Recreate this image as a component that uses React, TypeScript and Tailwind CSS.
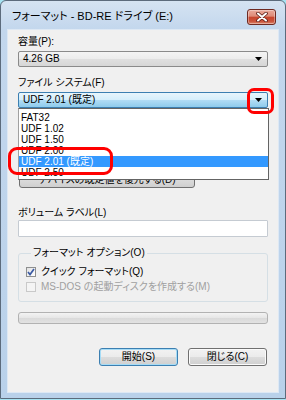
import React from "react";

const F = "font-['Liberation_Sans','Noto_Sans_CJK_JP',sans-serif] [font-feature-settings:'palt']";

function Arrow() {
  return (
    <svg width="7" height="4" viewBox="0 0 7 4">
      <path d="M0 0 H7 L3.5 4 Z" fill="#000" />
    </svg>
  );
}

const items = ["FAT32", "UDF 1.02", "UDF 1.50", "UDF 2.00", "UDF 2.01 (既定)", "UDF 2.50"];

export default function App() {
  return (
    <div className={`w-[286px] h-[400px] bg-[#a6e3f2] text-black ${F}`}>
      <div className="relative w-[286px] h-[399px] border border-[#5c6b7c] rounded-t-[6px] bg-[linear-gradient(to_bottom,#d5e3f2_0px,#c3d7ed_28px,#b9d1ea_100%)] flex flex-col">
        {/* title bar */}
        <div className="h-[28px] flex items-start justify-between pl-[11px] pr-[9px]">
          <div className="mt-[8px] text-[11px] leading-[14px] whitespace-nowrap">フォーマット - BD-RE ドライブ (E:)</div>
          <div className="mt-[8px] w-[29px] h-[16px] rounded-[3px] border border-[#6e2a22] bg-[linear-gradient(to_bottom,#eaaa9c_0%,#de8a77_45%,#c8452d_50%,#c9523a_80%,#dc866c_100%)] flex items-center justify-center shadow-[inset_0_0_0_1px_rgba(255,255,255,0.35)]">
            <svg width="12" height="10" viewBox="0 0 12 10">
              <path d="M2 1.5 L10 8.5 M10 1.5 L2 8.5" stroke="#5a1d16" strokeWidth="3.6" strokeLinecap="round" />
              <path d="M2 1.5 L10 8.5 M10 1.5 L2 8.5" stroke="#ffffff" strokeWidth="2" strokeLinecap="round" />
            </svg>
          </div>
        </div>

        {/* client area */}
        <div className="mx-[6px] h-[364px] bg-[#f0f0f0] border border-[#dde8f4] flex flex-col px-[10px] pt-[6px] text-[10px]">
          <div className="h-[12px] leading-[12px]">容量(P):</div>
          <div className="mt-[3px] h-[16px] rounded-[2px] border border-[#8a8a8a] bg-[linear-gradient(to_bottom,#f4f4f4_0%,#ececec_50%,#e0e0e0_50%,#d6d6d6_100%)] flex items-center justify-between pl-[4px] pr-[5px]">
            <span className="leading-[12px]">4.26 GB</span>
            <Arrow />
          </div>

          <div className="mt-[10px] h-[12px] leading-[12px]">ファイル システム(F)</div>
          <div className="relative mt-[3px] z-10">
            <div className="h-[16px] rounded-[2px] border border-[#3c7fb1] bg-[linear-gradient(to_bottom,#e8f5fc_0%,#d4eefb_50%,#b1dcf5_52%,#8ecbec_100%)] flex items-center justify-between pl-[4px] pr-[5px]">
              <span className="leading-[12px]">UDF 2.01 (既定)</span>
              <Arrow />
            </div>
            <div className="absolute left-0 top-[16px] w-[251px] h-[72px] bg-white border border-[#646464] border-l-[#a0a0a0] pt-[3px] overflow-hidden">
              {items.map((t, i) => (
                <div
                  key={t}
                  className={
                    i === 4
                      ? "h-[11px] leading-[11px] pl-[2px] bg-[#3399ff] text-white"
                      : "h-[11px] leading-[11px] pl-[2px]"
                  }
                >
                  {t}
                </div>
              ))}
            </div>
          </div>

          <div className="mt-[61px] w-[176px] h-[19px] ml-[1px] rounded-[3px] border border-[#707070] bg-[linear-gradient(to_bottom,#f2f2f2_0%,#ebebeb_50%,#dddddd_50%,#cfcfcf_100%)] flex items-center justify-center">
            <span className="leading-[12px] mt-[2px]">デバイスの既定値を復元する(D)</span>
          </div>

          <div className="mt-[19px] h-[12px] leading-[12px]">ボリューム ラベル(L)</div>
          <div className="mt-[1px] h-[17px] bg-white border border-[#c5cbd2] rounded-[1px]" />

          <fieldset className="mt-[10px] border border-[#d5dfe5] rounded-[3px] pl-[7px] pb-[8px]">
            <legend className="ml-[5px] px-[2px] h-[12px] leading-[12px]">フォーマット オプション(O)</legend>
            <div className="mt-[7px] h-[12px] flex items-center">
              <div className="w-[10px] h-[10px] border border-[#8e8f8f] bg-[linear-gradient(to_bottom_right,#e2e2e2,#ffffff)] flex items-center justify-center">
                <svg width="8" height="8" viewBox="0 0 8 8">
                  <path d="M1 4 L3 6.5 L7 1" stroke="#3b5aa3" strokeWidth="1.7" fill="none" />
                </svg>
              </div>
              <span className="ml-[5px] leading-[12px]">クイック フォーマット(Q)</span>
            </div>
            <div className="mt-[3px] h-[12px] flex items-center text-[#a0a0a0]">
              <div className="w-[10px] h-[10px] border border-[#c9c9c9] bg-[#f4f4f4]" />
              <span className="ml-[5px] leading-[12px]">MS-DOS の起動ディスクを作成する(M)</span>
            </div>
          </fieldset>

          <div className="mt-[10px] h-[12px] rounded-[3px] border border-[#b2b2b2] bg-[linear-gradient(to_bottom,#f3f3f3_0%,#e6e6e6_50%,#dadada_51%,#e2e2e2_100%)]" />

          <div className="mt-[24px] flex justify-end gap-[10px] mr-[1px]">
            <div className="w-[79px] h-[18px] rounded-[3px] border border-[#3c7fb1] shadow-[inset_0_0_0_1px_#a6dcf6] bg-[linear-gradient(to_bottom,#f2f2f2_0%,#ebebeb_50%,#dddddd_50%,#cfcfcf_100%)] flex items-center justify-center">
              <span className="leading-[12px]">開始(S)</span>
            </div>
            <div className="w-[79px] h-[18px] rounded-[3px] border border-[#707070] shadow-[inset_0_0_0_1px_#fbfbfb] bg-[linear-gradient(to_bottom,#f2f2f2_0%,#ebebeb_50%,#dddddd_50%,#cfcfcf_100%)] flex items-center justify-center">
              <span className="leading-[12px]">閉じる(C)</span>
            </div>
          </div>
        </div>

        {/* red annotations */}
        <div className="absolute left-[7px] top-[146px] w-[105px] h-[28px] rounded-[9px] border-[3px] border-[#ff0000] z-20" />
        <div className="absolute left-[246px] top-[87px] w-[27px] h-[26px] rounded-[7px] border-[3px] border-[#ff0000] z-20" />
      </div>
    </div>
  );
}
